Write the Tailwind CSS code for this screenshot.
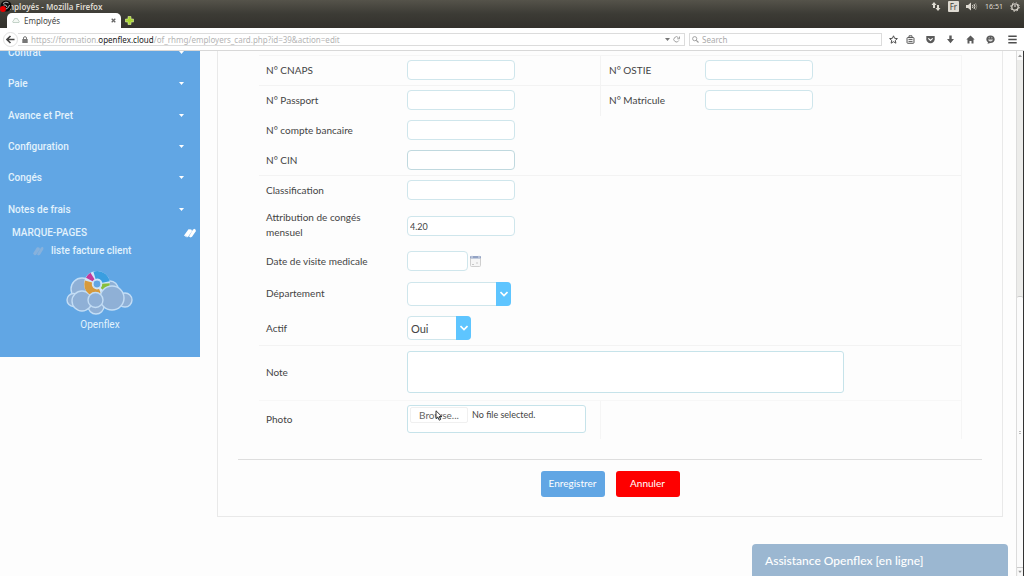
<!DOCTYPE html>
<html lang="fr">
<head>
<meta charset="utf-8">
<title>Employés</title>
<script src="https://cdn.jsdelivr.net/npm/@tailwindcss/browser@4"></script>
</head>
<body class="flex h-screen flex-col overflow-hidden bg-[#fdfdfd] font-[Lato,'Noto_Sans',sans-serif] text-[10px] leading-[15px] text-[#444]">

<header class="shrink-0 font-['Noto_Sans',sans-serif]">
  <div class="bg-linear-to-b from-[#55534a] via-[#3c3b35] to-[#33312c]">
    <div class="relative flex h-[13px] items-center justify-between pr-1 pl-[9px] text-[8px] leading-[12px] text-[#dfdbd2]">
      <svg class="absolute top-0 left-0 size-3" viewBox="0 0 12 12" aria-hidden="true"><circle cx="6" cy="6" r="5.500" fill="#0c0c0c"/><path d="M3 3.500Q6 1 8.500 3M3.500 5Q6 4 7 7M9.500 5Q9 8 6 9" stroke="#bbb" stroke-width="1" fill="none"/><circle cx="3" cy="9" r="3" fill="#e80000"/></svg>
      <h1 class="font-semibold">nployés - Mozilla Firefox</h1>
      <div class="flex items-center gap-[7px]">
        <svg class="h-[9px] w-[10px]" viewBox="0 0 10 9" fill="#dfdbd2" aria-hidden="true"><path d="M3 0L5.500 3H4V6H2V3H.5ZM7 9L4.500 6H6V3H8V6H9.500Z"/></svg>
        <span class="h-[11px] rounded-[1px] bg-[#dfdbd2] px-[2px] text-[8px] leading-[11px] text-[#3c3b37]">Fr</span>
        <svg class="h-[9px] w-[12px]" viewBox="0 0 12 9" aria-hidden="true"><path d="M0 3H2L5 .5V8.500L2 6H0Z" fill="#dfdbd2"/><path d="M6.500 3Q7.500 4.500 6.500 6M8 2Q9.800 4.500 8 7" stroke="#dfdbd2" fill="none"/><path d="M9.500 1Q12 4.500 9.500 8" stroke="#8a887f" fill="none"/></svg>
        <time class="text-[7px]">16:51</time>
        <svg class="size-[10px]" viewBox="0 0 10 10" aria-hidden="true"><circle cx="5" cy="5" r="3.200" fill="none" stroke="#dfdbd2" stroke-width="1.200"/><circle cx="5" cy="5" r="4.300" fill="none" stroke="#dfdbd2" stroke-dasharray="1.400 2"/><path d="M5 .5V5" stroke="#3c3b37" stroke-width="2.500"/><path d="M5 1V5" stroke="#dfdbd2" stroke-width="1.200"/></svg>
      </div>
    </div>
    <div class="flex h-[15px] items-center pl-[7px]">
      <div class="flex h-[15px] w-[114px] items-center gap-1 rounded-t-[5px] bg-white px-[5px] text-[#444]">
        <svg class="h-[7px] w-2" viewBox="0 0 8 7" aria-hidden="true"><path d="M1 5.500Q0 4 2 3Q2 1 4 1.500Q6 1 6 3Q8 4 7 5.500Z" fill="#f4f8f4" stroke="#adc2b4" stroke-width=".7"/></svg>
        <span class="flex-1 text-[8px] leading-[14px]">Employés</span>
        <button aria-label="Fermer l'onglet" class="flex"><svg class="size-[5px]" viewBox="0 0 5 5"><path d="M.7.7L4.300 4.300M4.300.7L.7 4.300" stroke="#666" stroke-width="1.300"/></svg></button>
      </div>
      <button aria-label="Nouvel onglet" class="ml-1 flex"><svg class="size-[9px]" viewBox="0 0 9 9"><path d="M3 .5H6V3H8.500V6H6V8.500H3V6H.5V3H3Z" fill="#a9d435" stroke="#dff0a0" stroke-width=".6"/></svg></button>
    </div>
  </div>
  <div class="flex h-[23px] items-center border-b border-[#d8d8d8] bg-white pr-[7px] pl-[3px] text-[#6e6e6e]">
    <button aria-label="Précédent" class="flex size-[15px] shrink-0 items-center justify-center rounded-full border border-[#e0e0e0]"><svg class="size-[9px]" viewBox="0 0 9 9"><path d="M8.500 4.500H1.500M4.500 1L1 4.500L4.500 8" fill="none" stroke="#444" stroke-width="1.600"/></svg></button>
    <div class="flex h-[13px] flex-1 items-center border-y border-r border-[#dcdcdc] px-1 text-[8px] leading-[11px] text-[#b4b4b4]">
      <svg class="mr-[3px] h-[7px] w-[6px]" viewBox="0 0 6 7" aria-hidden="true"><path d="M1.500 3V2Q1.500.7 3 .7T4.500 2V3" fill="none" stroke="#777"/><rect x=".3" y="3" width="5.400" height="4" fill="#777"/></svg>
      <span class="flex-1 whitespace-nowrap">https://formation.<b class="font-normal text-[#222]">openflex.cloud</b>/of_rhmg/employers_card.php?id=39&amp;action=edit</span>
      <svg class="mr-[3px] h-[3px] w-[5px]" viewBox="0 0 5 3" aria-hidden="true"><path d="M0 0H5L2.500 3Z" fill="#777"/></svg>
      <button aria-label="Actualiser" class="flex"><svg class="size-[7px]" viewBox="0 0 7 7"><path d="M5.800 4.500A2.600 2.600 0 1 1 5.500 1.800M6.500.5V2.800H4.200" fill="none" stroke="#999" stroke-width=".9"/></svg></button>
    </div>
    <div class="ml-1 flex h-[13px] w-[193px] items-center gap-[3px] border border-[#dcdcdc] px-[2px]">
      <svg class="size-[7px]" viewBox="0 0 7 7" aria-hidden="true"><circle cx="2.700" cy="2.700" r="2.100" fill="none" stroke="#999" stroke-width=".9"/><path d="M4.300 4.300L6.500 6.500" stroke="#999" stroke-width="1.100"/></svg>
      <input type="search" aria-label="Search" placeholder="Search" class="min-w-0 flex-1 text-[8px] leading-[11px] outline-none placeholder:text-[#aaa]">
    </div>
    <div class="ml-[7px] flex items-center gap-[11px]">
      <button aria-label="Marquer" class="flex"><svg class="size-[9px]" viewBox="0 0 9 9"><path d="M4.500.8L5.600 3.300L8.400 3.600L6.300 5.400L6.900 8.200L4.500 6.700L2.100 8.200L2.700 5.400L.6 3.600L3.400 3.300Z" fill="none" stroke="#4e4e4e"/></svg></button>
      <button aria-label="Marque-pages" class="-ml-[3px] flex"><svg class="size-[9px]" viewBox="0 0 9 9"><path d="M3 2.500V.8H6V2.500" fill="none" stroke="#5a5a5a"/><rect x="1" y="2.500" width="7" height="5.800" rx=".8" fill="#eee" stroke="#5a5a5a"/><path d="M2.500 4.500H6.500M2.500 6.500H6.500" stroke="#5a5a5a" stroke-width=".9"/></svg></button>
      <button aria-label="Pocket" class="flex"><svg class="size-[9px]" viewBox="0 0 9 9"><path d="M.3 1H8.700V4.300Q8.300 8 4.500 8.300Q.7 8 .3 4.300Z" fill="#5a5a5a"/><path d="M2.300 3.400L4.500 5.500L6.700 3.400" fill="none" stroke="#fff" stroke-width="1.100"/></svg></button>
      <button aria-label="Téléchargements" class="flex"><svg class="size-[9px]" viewBox="0 0 9 9"><path d="M3.300.5H5.700V4H8L4.500 8.200L1 4H3.300Z" fill="#5a5a5a"/></svg></button>
      <button aria-label="Accueil" class="flex"><svg class="size-[9px]" viewBox="0 0 9 9"><path d="M4.500.5L8.700 4.600H7.500V8.500H5.500V6H3.500V8.500H1.500V4.600H.3Z" fill="#5a5a5a"/></svg></button>
      <button aria-label="Discussion" class="flex"><svg class="size-[9px]" viewBox="0 0 9 9"><path d="M4.500.6C7 .6 8.700 2.200 8.700 4.300S7 8 4.500 8L1.500 8.700L2 7.300Q.3 6.200.3 4.300C.3 2.200 2 .6 4.500.6Z" fill="#5a5a5a"/><path d="M2 4.600H7Q6.500 6.500 4.500 6.500T2 4.600Z" fill="#ddd"/><path d="M2.700 2.800H3.700M5.300 2.800H6.300" stroke="#ddd"/></svg></button>
      <button aria-label="Menu" class="ml-[2px] flex"><svg class="size-[9px]" viewBox="0 0 9 9"><path d="M.3 1.300H8.700M.3 4.500H8.700M.3 7.700H8.700" stroke="#4e4e4e" stroke-width="1.600"/></svg></button>
    </div>
  </div>
</header>

<div class="flex min-h-0 flex-1 items-stretch overflow-hidden">
  <aside class="h-[306px] w-[200px] shrink-0 overflow-hidden bg-[#61a6e4] font-[Roboto,sans-serif] font-medium text-[#e2f2fc]">
    <nav class="-mt-[14px] flex h-[188px] flex-col">
      <a href="#" class="flex flex-1 items-center justify-between pr-4 pl-2">Contrat<svg class="h-[3px] w-[5px]" viewBox="0 0 5 3"><path d="M0 0H5L2.500 3Z" fill="#fff"/></svg></a>
      <a href="#" class="flex flex-1 items-center justify-between pr-4 pl-2">Paie<svg class="h-[3px] w-[5px]" viewBox="0 0 5 3"><path d="M0 0H5L2.500 3Z" fill="#fff"/></svg></a>
      <a href="#" class="flex flex-1 items-center justify-between pr-4 pl-2">Avance et Pret<svg class="h-[3px] w-[5px]" viewBox="0 0 5 3"><path d="M0 0H5L2.500 3Z" fill="#fff"/></svg></a>
      <a href="#" class="flex flex-1 items-center justify-between pr-4 pl-2">Configuration<svg class="h-[3px] w-[5px]" viewBox="0 0 5 3"><path d="M0 0H5L2.500 3Z" fill="#fff"/></svg></a>
      <a href="#" class="flex flex-1 items-center justify-between pr-4 pl-2">Congés<svg class="h-[3px] w-[5px]" viewBox="0 0 5 3"><path d="M0 0H5L2.500 3Z" fill="#fff"/></svg></a>
      <a href="#" class="flex flex-1 items-center justify-between pr-4 pl-2">Notes de frais<svg class="h-[3px] w-[5px]" viewBox="0 0 5 3"><path d="M0 0H5L2.500 3Z" fill="#fff"/></svg></a>
    </nav>
    <div class="flex h-[15px] items-center justify-between pr-1 pl-3">
      <h2>MARQUE-PAGES</h2>
      <svg class="h-[10px] w-3" viewBox="0 0 12 10" aria-hidden="true"><path d="M0 7.500L4.500 1.200L7.300 1.500L8 3L4 9L2.500 9.200ZM5 8.500L9 1.500L11 .8L12 3L8 8.800L6.500 9.500Z" fill="#fff"/><path d="M1.500 7.800L3.500 9" stroke="#9bc6ee" stroke-width=".6"/></svg>
    </div>
    <a href="#" class="flex h-[21px] items-center gap-[7px] pl-8"><svg class="h-[10px] w-3" viewBox="0 0 12 10" aria-hidden="true"><path d="M1 7.500L5 1.200L7.300 1.500L8 3L4 9L2.500 9.200ZM5 8.500L9 1.500L11 .8L11.500 3L8 8.800L6.500 9.500Z" fill="#86b1dc"/></svg>liste facture client</a>
    <div class="flex flex-col items-center pt-2 font-normal">
      <svg class="h-[48px] w-[68px]" viewBox="0 0 68 48" aria-hidden="true">
        <g fill="#8fb0d6" stroke="#c3ddf5" stroke-width="1.400"><circle cx="44" cy="20" r="8"/><circle cx="16" cy="20" r="11"/><circle cx="7.500" cy="31" r="6.500"/><circle cx="59" cy="31" r="7"/><circle cx="30" cy="37" r="8"/><circle cx="16" cy="32" r="10"/></g>
        <circle cx="31" cy="15" r="13" fill="#d3e6f8"/>
        <g fill="none" stroke-width="7.500"><path d="M34.500 23.500A9 9 0 0 1 22.500 12.500" stroke="#d69a3c"/><path d="M23.300 10.500A9 9 0 0 1 26.500 7" stroke="#c23a9b"/><path d="M28.500 6.300A9 9 0 0 1 40 13" stroke="#3a9ee0"/><path d="M40 14.500A9 9 0 0 1 37.500 21.500" stroke="#87bf3c"/></g>
        <circle cx="31" cy="15" r="4" fill="#61a6e4" stroke="#d3e6f8" stroke-width="1.200"/>
        <g fill="#8fb0d6" stroke="#c3ddf5" stroke-width="1.400"><circle cx="46" cy="29" r="12"/><circle cx="29.500" cy="31" r="7.500"/></g>
      </svg>
      <span>Openflex</span>
    </div>
  </aside>

  <main class="min-w-0 flex-1 pr-[13px] pl-[17px]">
    <form class="flex h-[466px] flex-col border-x border-b border-[#e9e9e9] px-5">
      <div class="mt-1 mr-5 ml-[21px] border-t border-r border-[#f5f5f5]">
        <div class="flex h-[30px] border-b border-[#f3f3f3]">
          <div class="flex w-1/2 shrink-0 items-center pb-px pl-[7px]"><label for="cnaps" class="w-[141px]">N° CNAPS</label><input id="cnaps" class="h-5 w-[108px] rounded-[4px] border border-[#cfe6ec] bg-white px-[2px]"></div>
          <div class="-ml-[10px] flex items-center border-l border-[#f3f3f3] pb-px pl-2"><label for="ostie" class="w-24">N° OSTIE</label><input id="ostie" class="h-5 w-[108px] rounded-[4px] border border-[#cfe6ec] bg-white px-[2px]"></div>
        </div>
        <div class="flex h-[30px]">
          <div class="flex w-1/2 shrink-0 items-center pb-[2px] pl-[7px]"><label for="passport" class="w-[141px]">N° Passport</label><input id="passport" class="h-5 w-[108px] rounded-[4px] border border-[#cfe6ec] bg-white px-[2px]"></div>
          <div class="-ml-[10px] flex items-center border-l border-[#f3f3f3] pb-[2px] pl-2"><label for="matricule" class="w-24">N° Matricule</label><input id="matricule" class="h-5 w-[108px] rounded-[4px] border border-[#cfe6ec] bg-white px-[2px]"></div>
        </div>
        <div class="flex h-[30px] items-center pb-[2px] pl-[7px]"><label for="compte" class="w-[141px]">N° compte bancaire</label><input id="compte" class="h-5 w-[108px] rounded-[4px] border border-[#cfe6ec] bg-white px-[2px]"></div>
        <div class="flex h-[30px] items-center border-b border-[#f3f3f3] pb-px pl-[7px]"><label for="cin" class="w-[141px]">N° CIN</label><input id="cin" class="h-5 w-[108px] rounded-[4px] border border-[#c0d9df] bg-white px-[2px]"></div>
        <div class="flex h-[30px] items-center pb-[2px] pl-[7px]"><label for="classif" class="w-[141px]">Classification</label><input id="classif" class="h-5 w-[108px] rounded-[4px] border border-[#cfe6ec] bg-white px-[2px]"></div>
        <div class="flex h-10 items-center pl-[7px]"><label for="conges" class="w-[141px] pr-9 pb-[2px]">Attribution de congés mensuel</label><input id="conges" value="4.20" class="h-5 w-[108px] rounded-[4px] border border-[#cfe6ec] bg-white px-[2px] text-[9px]"></div>
        <div class="flex h-[32px] items-center pb-[2px] pl-[7px]"><label for="visite" class="w-[141px]">Date de visite medicale</label><input id="visite" class="h-5 w-[61px] rounded-[4px] border border-[#cfe6ec] bg-white px-[2px]">
          <button type="button" aria-label="Calendrier" class="ml-[2px] flex"><svg class="h-3 w-[11px]" viewBox="0 0 11 12"><rect x=".5" y="1.500" width="10" height="10" rx="1" fill="#f6f6f6" stroke="#cfcfcf"/><rect y="1" width="11" height="2.500" rx="1" fill="#93a3c4"/><path d="M2 .5V3M9 .5V3" stroke="#dde3f0"/><path d="M2 9.500H4M6 8H8" stroke="#c8c8c8"/></svg></button></div>
        <div class="flex h-[33px] items-center pb-[2px] pl-[7px]"><label for="dept" class="w-[141px]">Département</label>
          <div class="relative flex h-6 w-[104px] rounded-[4px] border border-[#cfe6ec] bg-white"><select id="dept" class="w-full appearance-none px-[3px] outline-none"><option></option></select>
            <span class="pointer-events-none absolute -inset-y-px -right-px flex w-[15px] items-center justify-center rounded-r-[4px] bg-[#5ec5ff]"><svg class="h-[6px] w-2" viewBox="0 0 8 6"><path d="M.5 1L4 4.500L7.500 1" fill="none" stroke="#fff" stroke-width="1.600"/></svg></span></div></div>
        <div class="flex h-[35px] items-center border-b border-[#f3f3f3] pl-[7px]"><label for="actif" class="w-[141px]">Actif</label>
          <div class="relative flex h-6 w-[64px] rounded-[4px] border border-[#cfe6ec] bg-white"><select id="actif" class="w-full appearance-none px-[3px] text-[11px] outline-none"><option>Oui</option><option>Non</option></select>
            <span class="pointer-events-none absolute -inset-y-px -right-px flex w-[15px] items-center justify-center rounded-r-[4px] bg-[#5ec5ff]"><svg class="h-[6px] w-2" viewBox="0 0 8 6"><path d="M.5 1L4 4.500L7.500 1" fill="none" stroke="#fff" stroke-width="1.600"/></svg></span></div></div>
        <div class="flex h-[55px] items-center border-b border-[#f7f7f7] pb-[2px] pl-[7px]"><label for="note" class="w-[141px]">Note</label><textarea id="note" class="block h-[42px] w-[437px] resize-none rounded-[3px] border border-[#c6e3ea] bg-white"></textarea></div>
        <div class="flex h-[38px]">
          <div class="flex items-center pr-[14px] pb-[2px] pl-[7px]"><span class="w-[141px]">Photo</span>
            <label class="relative flex h-[28px] w-[179px] items-start gap-1 rounded-[3px] border border-[#c6e3ea] bg-white pt-px pl-[2px] text-[9px]">
              <input type="file" aria-label="Photo" class="sr-only">
              <span class="w-[58px] rounded-[2px] border border-[#f0f0f0] text-center text-[10px] leading-[14px] text-[#666]">Browse...</span>
              <span class="leading-[16px]">No file selected.</span>
              <svg class="absolute top-1 left-[27px] h-[11px] w-2" viewBox="0 0 8 11" aria-hidden="true"><path d="M1 .8V8.500L2.800 7L4.200 10.200L5.600 9.500L4.200 6.500H6.800Z" fill="#fff" stroke="#222" stroke-width=".9"/></svg>
            </label></div>
          <div class="border-l border-[#f5f5f5]"></div>
        </div>
      </div>
      <div class="mt-5 flex justify-center gap-[11px] border-t border-[#dedede] pt-[11px] text-white">
        <button type="submit" class="h-[26px] w-16 rounded-[3px] bg-[#61a6e4] pb-[2px]">Enregistrer</button>
        <button type="button" class="h-[26px] w-16 rounded-[3px] bg-[#fe0000] pb-[2px]">Annuler</button>
      </div>
    </form>
    <button class="mt-[27px] -mr-[5px] ml-auto block h-[33px] w-[256px] rounded-t-[4px] bg-[#9bb7d1] pl-[13px] text-left text-[12px] font-medium text-white">Assistance Openflex [en ligne]</button>
  </main>

  <div class="flex w-2 shrink-0 flex-col border-r border-l border-r-[#333] border-l-[#dcdcdc] bg-[#ececea]" aria-hidden="true">
    <svg class="h-[9px] w-full" viewBox="0 0 6 9"><rect width="6" height="9" fill="#fafafa"/><path d="M1 6L3 3.500L5 6Z" fill="#999"/></svg>
    <div class="mt-[236px] flex flex-1 flex-col items-center justify-center gap-px rounded-t-[2px] border-t border-[#ccc] bg-[#fbfbfb]"><i class="h-px w-[2px] bg-[#bbb]"></i><i class="h-px w-[2px] bg-[#bbb]"></i></div>
    <svg class="h-[9px] w-full border-t border-[#ccc]" viewBox="0 0 6 9"><rect width="6" height="9" fill="#fafafa"/><path d="M1 3L3 5.500L5 3Z" fill="#999"/></svg>
  </div>
</div>
</body>
</html>
